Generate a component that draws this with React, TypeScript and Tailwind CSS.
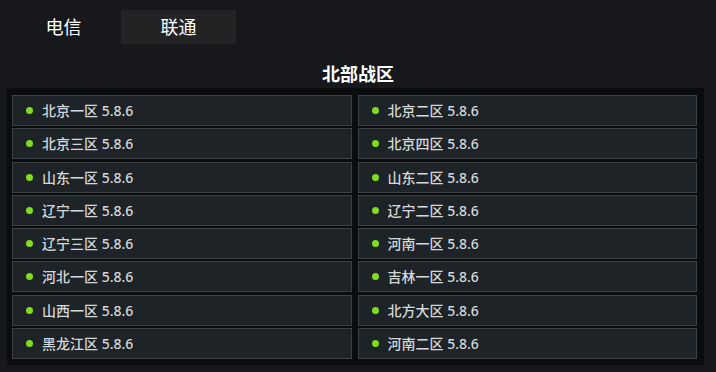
import React, { useState } from 'react';

const SERVERS = [
  '北京一区', '北京二区',
  '北京三区', '北京四区',
  '山东一区', '山东二区',
  '辽宁一区', '辽宁二区',
  '辽宁三区', '河南一区',
  '河北一区', '吉林一区',
  '山西一区', '北方大区',
  '黑龙江区', '河南二区',
];

const VERSION = '5.8.6';

export default function App() {
  const [tab, setTab] = useState<'dx' | 'lt'>('lt');

  return (
    <div
      className="w-[716px] h-[372px] overflow-hidden bg-[#17181c] text-white"
      style={{ fontFamily: '"Noto Sans", "Noto Sans CJK SC", sans-serif' }}
    >
      {/* Tabs */}
      <div className="flex items-center pt-[10px] pl-[6px] h-[44px]">
        <button
          onClick={() => setTab('dx')}
          className={`w-[115px] h-[34px] flex items-center justify-center text-[18px] ${tab === 'dx' ? 'bg-[#232326]' : ''}`}
        >
          电信
        </button>
        <button
          onClick={() => setTab('lt')}
          className={`w-[115px] h-[34px] flex items-center justify-center text-[18px] ${tab === 'lt' ? 'bg-[#232326]' : ''}`}
        >
          联通
        </button>
      </div>

      {/* Section title */}
      <div className="h-[44px] flex items-center justify-center pt-[16px] text-[18px] font-bold">
        北部战区
      </div>

      {/* Server grid */}
      <div className="ml-[7px] w-[697px] h-[277px] bg-[#0b0c0e] pt-[7px] pl-[5px] pr-[7px]">
        <div className="grid grid-cols-2 gap-x-[6px] gap-y-[2.3px]">
          {SERVERS.map(name => (
            <div
              key={name}
              className="h-[31px] flex items-center border border-[#3b4145] bg-[#1d2327] pl-[13px]"
            >
              <span className="w-[7px] h-[7px] rounded-full bg-[#7fdc1e] mr-[9px]" />
              <span className="text-[14px] font-medium text-[#d6d8d9]">
                {name} {VERSION}
              </span>
            </div>
          ))}
        </div>
      </div>
    </div>
  );
}
